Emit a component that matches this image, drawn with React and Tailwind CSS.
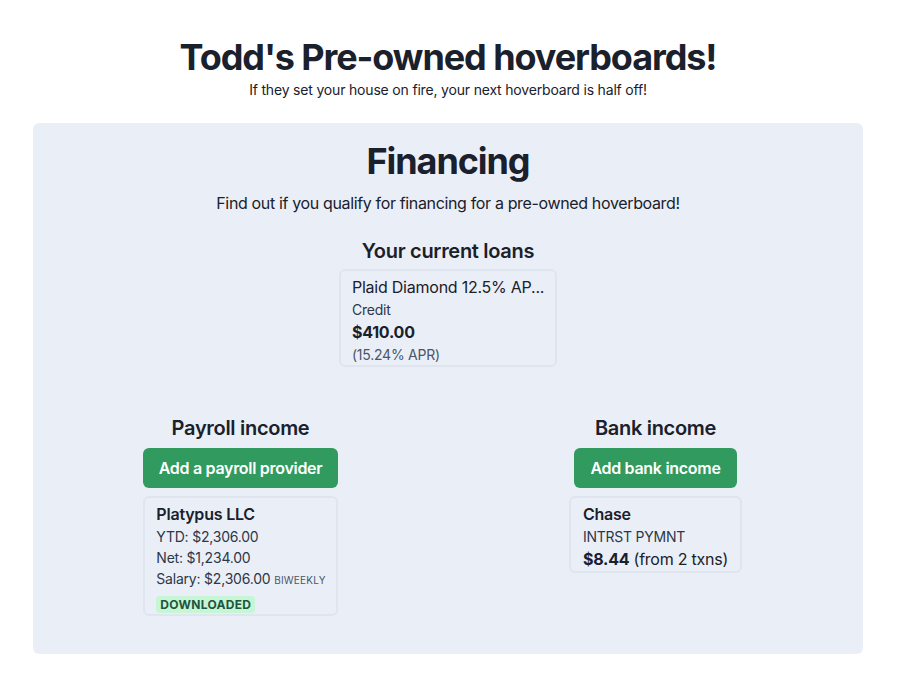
export default function App() {
  const font = { fontFamily: 'Inter, "Noto Sans", sans-serif' };
  return (
    <div className="min-h-screen bg-white text-[#1A202C]" style={font}>
      <div className="ml-[33px] w-[830px] pt-[36px] flex flex-col items-center">
        <h1 className="text-[36px] leading-[1.2] font-bold tracking-[-0.03em]">Todd's Pre-owned hoverboards!</h1>
        <p className="text-[14px] leading-[21px] tracking-[-0.013em]">If they set your house on fire, your next hoverboard is half off!</p>
      </div>
      <div className="ml-[33px] mt-[23px] w-[830px] rounded-md bg-[#EAEFF7] pt-[17px] pb-[38px] flex flex-col items-center">
        <h2 className="text-[36px] leading-[1.2] font-bold tracking-[-0.03em]">Financing</h2>
        <p className="mt-2 text-[16px] leading-6 tracking-[-0.022em]">Find out if you qualify for financing for a pre-owned hoverboard!</p>
        <h3 className="mt-6 mb-[6px] text-[20px] leading-[1.2] font-semibold tracking-[-0.015em]">Your current loans</h3>
        <div className="w-[218px] rounded-md border-2 border-[#DFE5EE] pt-1 px-[11px] tracking-[-0.015em]">
          <div className="text-[16px] leading-6 whitespace-nowrap">Plaid Diamond 12.5% AP...</div>
          <div className="text-[14px] leading-[21px] text-[#2D3748]">Credit</div>
          <div className="text-[16px] leading-6 font-bold">$410.00</div>
          <div className="text-[14px] leading-[21px] text-[#4A5568]">(15.24% APR)</div>
        </div>
        <div className="mt-[49px] grid w-full grid-cols-2">
          <div className="flex flex-col items-center">
            <h3 className="mb-2 text-[20px] leading-[1.2] font-semibold tracking-[-0.015em]">Payroll income</h3>
            <button className="h-10 rounded-md bg-[#319A5E] px-4 text-[16px] font-semibold text-white tracking-[-0.018em]">Add a payroll provider</button>
            <div className="mt-2 rounded-md border-2 border-[#DFE5EE] pt-1 pb-[1px] pl-[11px] pr-[10px] tracking-[-0.013em]">
              <div className="text-[16px] leading-6 font-semibold">Platypus LLC</div>
              <div className="text-[14px] leading-[21px] text-[#2D3748]">YTD: $2,306.00</div>
              <div className="text-[14px] leading-[21px] text-[#2D3748]">Net: $1,234.00</div>
              <div className="text-[14px] leading-[21px] text-[#2D3748] whitespace-nowrap">
                Salary: $2,306.00 <span className="text-[10px] uppercase tracking-[0.02em] text-[#4A5568]">biweekly</span>
              </div>
              <div className="mt-[5px] flex">
                <span className="rounded-sm bg-[#C6F6D5] px-1 text-[12px] leading-[17px] font-bold uppercase tracking-wide text-[#22543D]">Downloaded</span>
              </div>
            </div>
          </div>
          <div className="flex flex-col items-center">
            <h3 className="mb-2 text-[20px] leading-[1.2] font-semibold tracking-[-0.015em]">Bank income</h3>
            <button className="h-10 rounded-md bg-[#319A5E] px-4 text-[16px] font-semibold text-white tracking-[-0.018em]">Add bank income</button>
            <div className="mt-2 rounded-md border-2 border-[#DFE5EE] pt-1 px-[12px] tracking-[-0.015em]">
              <div className="text-[16px] leading-6 font-semibold">Chase</div>
              <div className="text-[14px] leading-[21px] text-[#2D3748]">INTRST PYMNT</div>
              <div className="text-[16px] leading-6">
                <span className="font-bold">$8.44</span> (from 2 txns)
              </div>
            </div>
          </div>
        </div>
      </div>
    </div>
  );
}
